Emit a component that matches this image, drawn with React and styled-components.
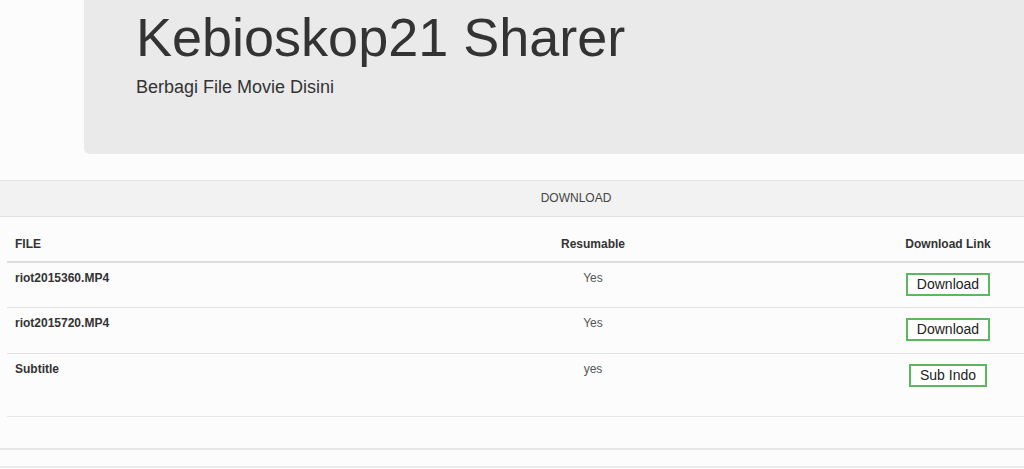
import styled, { createGlobalStyle } from "styled-components";

const GlobalStyle = createGlobalStyle`
  html, body {
    margin: 0;
    padding: 0;
    overflow: hidden;
    background: #fcfcfc;
  }
  body {
    font-family: "Liberation Sans", Arial, Helvetica, sans-serif;
    color: #333;
  }
`;

const files = [
  { name: "riot2015360.MP4", resumable: "Yes", label: "Download" },
  { name: "riot2015720.MP4", resumable: "Yes", label: "Download" },
  { name: "Subtitle", resumable: "yes", label: "Sub Indo", tall: true },
];

const App = () => {
  return (
    <Page>
      <GlobalStyle />
      <Jumbotron>
        <Title>Kebioskop21 Sharer</Title>
        <Lead>Berbagi File Movie Disini</Lead>
      </Jumbotron>
      <Panel>
        <PanelHeading>DOWNLOAD</PanelHeading>
        <PanelBody>
          <Table>
            <colgroup>
              <col style={{ width: 307 }} />
              <col style={{ width: 558 }} />
              <col style={{ width: 152 }} />
            </colgroup>
            <thead>
              <tr>
                <Th>FILE</Th>
                <Th $center>Resumable</Th>
                <Th $center>Download Link</Th>
              </tr>
            </thead>
            <tbody>
              {files.map((f, i) => (
                <Row key={f.name} $tall={f.tall} $first={i === 0}>
                  <Td $bold>{f.name}</Td>
                  <Td $center $muted>{f.resumable}</Td>
                  <Td $center>
                    <LinkButton href="#">{f.label}</LinkButton>
                  </Td>
                </Row>
              ))}
            </tbody>
          </Table>
        </PanelBody>
      </Panel>
      <Footer />
    </Page>
  );
};

const Page = styled.div`
  width: 1152px;
`;

const Jumbotron = styled.div`
  margin: 0 84px;
  height: 154px;
  box-sizing: border-box;
  padding: 7px 52px 0;
  background: #eaeaea;
  border-radius: 0 0 6px 6px;
`;

const Title = styled.h1`
  margin: 0;
  font-size: 54px;
  line-height: 60px;
  font-weight: 400;
  color: #333;
`;

const Lead = styled.p`
  margin: 8px 0 0;
  font-size: 18px;
  line-height: 25px;
  color: #333;
`;

const Panel = styled.div`
  margin-top: 26px;
  border-top: 1px solid #e2e2e2;
  border-bottom: 2px solid #e6e6e6;
  background: #fcfcfc;
`;

const PanelHeading = styled.div`
  height: 35px;
  line-height: 35px;
  text-align: center;
  font-size: 12px;
  color: #444;
  background: #f2f2f2;
  border-bottom: 1px solid #e0e0e0;
`;

const PanelBody = styled.div`
  padding: 11px 0 31px 7px;
`;

const Table = styled.table`
  width: 1017px;
  border-collapse: collapse;
  table-layout: fixed;
  font-size: 12px;
`;

const Th = styled.th`
  padding: 8px;
  line-height: 17px;
  font-weight: 700;
  text-align: ${(p) => (p.$center ? "center" : "left")};
  vertical-align: bottom;
  border-bottom: 2px solid #dddddd;
  color: #333;
`;

const Row = styled.tr`
  border-top: 1px solid #e2e2e2;
  & > td {
    padding-bottom: ${(p) => (p.$tall ? "29px" : p.$first ? "11px" : "12px")};
  }
  &:last-child {
    border-bottom: 1px solid #e8e8e8;
  }
`;

const Td = styled.td`
  padding: 7px 8px 11px;
  line-height: 17px;
  vertical-align: top;
  text-align: ${(p) => (p.$center ? "center" : "left")};
  font-weight: ${(p) => (p.$bold ? 700 : 400)};
  color: ${(p) => (p.$muted ? "#555" : "#333")};
`;

const LinkButton = styled.a`
  display: inline-block;
  margin-top: 3px;
  padding: 1px 9px;
  font-size: 14px;
  line-height: 17px;
  color: #222;
  text-decoration: none;
  border: 2px solid #5cb85c;
  background: #fff;
`;

const Footer = styled.div`
  margin-top: 16px;
  height: 10px;
  border-top: 2px solid #ececec;
`;

export default App;
